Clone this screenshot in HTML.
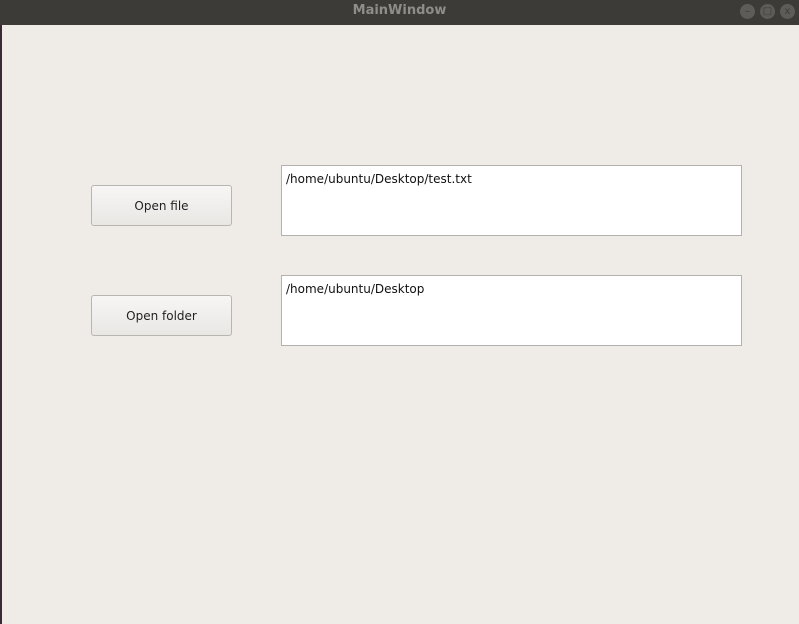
<!DOCTYPE html>
<html><head><meta charset="utf-8"><style>
*{margin:0;padding:0;box-sizing:border-box}
body{width:799px;height:624px;overflow:hidden;background:#efebe7;font-family:"DejaVu Sans","Liberation Sans",sans-serif;position:relative}
.tb{position:absolute;left:0;top:0;width:799px;height:25px;background:#3c3b37;color:#8f8d88;font-size:13px;font-weight:bold;text-align:center;line-height:22px}
.lb{position:absolute;left:0;top:25px;width:2px;height:599px;background:#3a2a35}
.c{position:absolute;top:4px;width:15px;height:15px;border-radius:50%;background:#5d5c58;color:#3c3b37;font-size:10px;line-height:15px;text-align:center;font-weight:normal}
.btn{position:absolute;left:91px;width:141px;height:41px;border:1px solid #b9b5b0;border-radius:3px;background:linear-gradient(#f7f6f5,#e9e7e4);font-size:12px;color:#222;text-align:center;line-height:41px}
.box{position:absolute;left:281px;width:461px;height:71px;border:1px solid #b4b0ab;background:#fff;font-size:12px;color:#111;padding:6px 4px}
</style></head><body>
<div class="tb">MainWindow
<div class="c" style="left:740px">–</div>
<div class="c" style="left:760px">□</div>
<div class="c" style="left:780px">x</div>
</div>
<div class="lb"></div>
<div class="btn" style="top:185px">Open file</div>
<div class="btn" style="top:295px">Open folder</div>
<div class="box" style="top:165px">/home/ubuntu/Desktop/test.txt</div>
<div class="box" style="top:275px">/home/ubuntu/Desktop</div>
</body></html>
